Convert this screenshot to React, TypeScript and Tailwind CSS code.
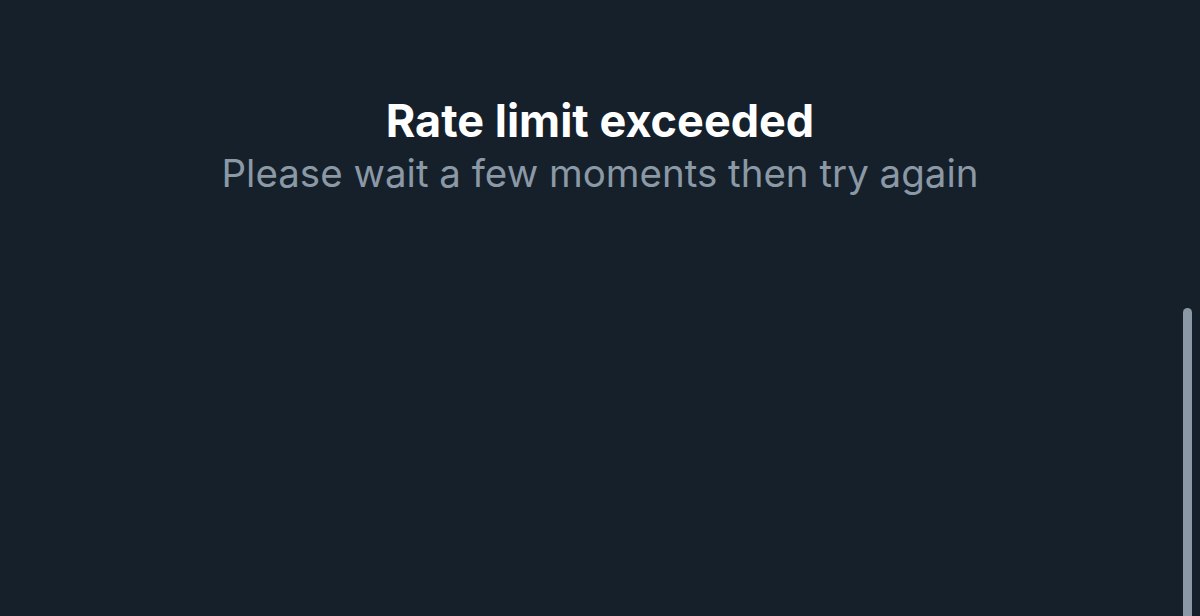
import React from 'react';

export default function App() {
  return (
    <div className="relative h-[616px] w-[1200px] overflow-hidden bg-[#15202b]">
      <div className="flex flex-col items-center pt-[95px] font-['Inter','Noto_Sans',sans-serif]">
        <h1 className="text-[45px] leading-[52px] font-bold text-white">
          Rate limit exceeded
        </h1>
        <p className="text-[38.5px] leading-[53px] text-[#8b98a5]">
          Please wait a few moments then try again
        </p>
      </div>

      {/* scrollbar thumb */}
      <div className="absolute top-[308px] right-[8px] bottom-0 w-[9px] rounded-t-full bg-[#8b98a5]" />
    </div>
  );
}
